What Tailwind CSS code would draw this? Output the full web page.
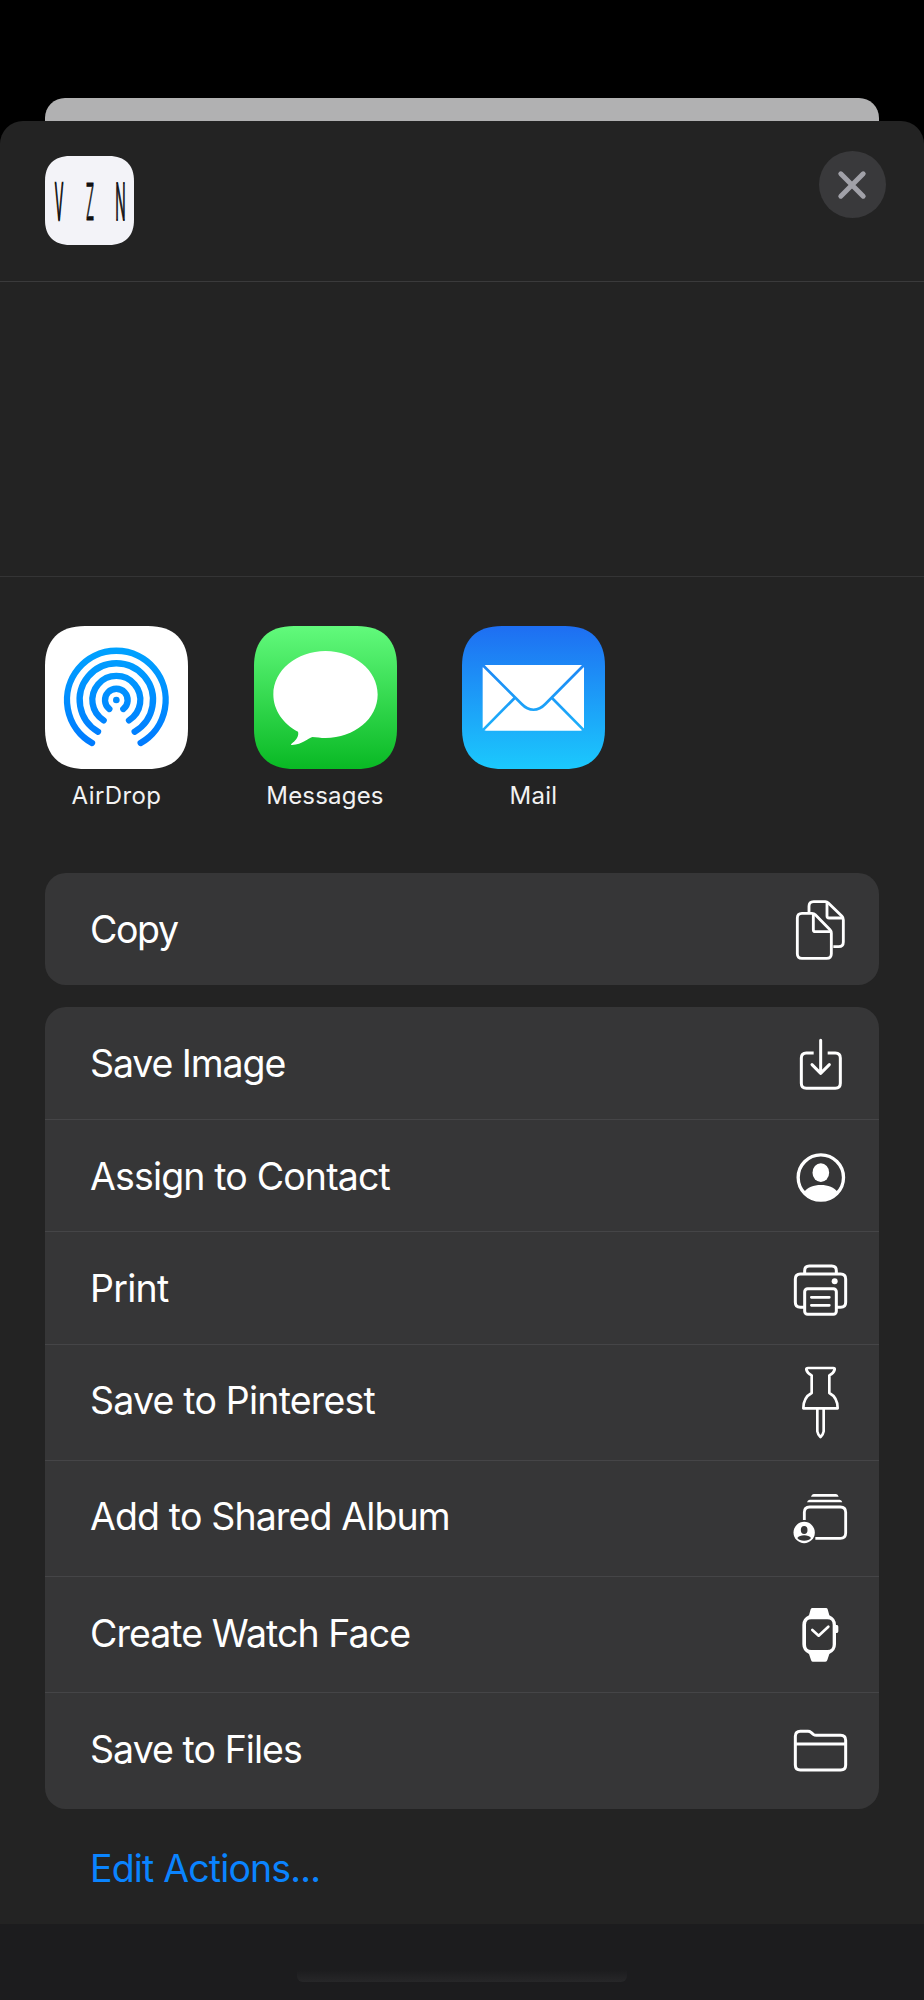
<!DOCTYPE html>
<html lang="en">
<head>
<meta charset="utf-8">
<title>Share</title>
<script src="https://cdn.jsdelivr.net/npm/@tailwindcss/browser@4"></script>
</head>
<body class="bg-black font-['Inter',sans-serif] text-white">
<div class="flex h-[2000px] w-[924px] flex-col overflow-hidden bg-black pt-[98px]">
  <div class="mx-[45px] h-[23px] shrink-0 rounded-t-[20px] bg-[#b1b1b2]"></div>
  <main class="flex flex-1 flex-col rounded-t-[23px] bg-[#232323]">
    <header class="flex h-[161px] shrink-0 items-start justify-between border-b border-[#3a3a3b] pt-[30px] pr-[38.500px] pl-[45px]">
      <svg class="mt-[5px] h-[89px] w-[89px]" viewBox="0 0 89 89">
        <path d="M0 25C0 9 9 0 25 0H64C80 0 89 9 89 25V64C89 80 80 89 64 89H25C9 89 0 80 0 64Z" fill="#f3f3f8"/>
        <g fill="#111" stroke="#111" font-family="Inter" font-size="51" font-weight="300" text-anchor="middle">
          <text transform="translate(14 63.500) scale(.25 1)" stroke-width="2.500">V</text>
          <text transform="translate(45 63.500) scale(.27 1)" stroke-width="1">Z</text>
          <text transform="translate(75.500 63.500) scale(.27 1)" stroke-width="2">N</text>
        </g>
      </svg>
      <button class="flex size-[67px] items-center justify-center rounded-full bg-[#39393b]" aria-label="Close">
        <svg class="size-[30px]" viewBox="0 0 30 30" fill="none" stroke="#a1a1a8" stroke-width="5" stroke-linecap="round"><path d="M3.800 3.800 26.200 26.200M26.200 3.800 3.800 26.200"/></svg>
      </button>
    </header>
    <section class="h-[295px] shrink-0 border-b border-[#343435]"></section>
    <section class="flex h-[296px] shrink-0 gap-[65.500px] pt-[49px] pl-[45px] text-[24px] leading-[30px] text-[#f2f2f2]">
      <div class="flex w-[143px] flex-col items-center gap-[12px]">
        <svg class="size-[143px] shrink-0" viewBox="44 48 429 429">
          <defs><linearGradient id="air" gradientUnits="userSpaceOnUse" x1="0" y1="113" x2="0" y2="408"><stop stop-color="#00a2ff"/><stop offset="1" stop-color="#007aff"/></linearGradient></defs>
          <path transform="translate(44 48)" d="M0 120C0 42 42 0 120 0H309C387 0 429 42 429 120V309C429 387 387 429 309 429H120C42 429 0 387 0 309Z" fill="#fff"/>
          <g fill="none" stroke="url(#air)" stroke-width="19" stroke-linecap="round">
            <path d="M185 399A148 148 0 1 1 331 399"/>
            <path d="M203 365A110 110 0 1 1 313 365"/>
            <path d="M220 331A72 72 0 1 1 296 331"/>
            <path d="M237 297A34 34 0 1 1 279 297"/>
          </g>
          <circle cx="258" cy="270" r="10" fill="#008cff"/>
        </svg>
        <span class="tracking-[0.4px]">AirDrop</span>
      </div>
      <div class="flex w-[143px] flex-col items-center gap-[12px]">
        <svg class="size-[143px] shrink-0" viewBox="671 48 429 429">
          <defs><linearGradient id="msg" x1="0" y1="0" x2="0" y2="1"><stop stop-color="#62fa7c"/><stop offset="1" stop-color="#09b924"/></linearGradient></defs>
          <path transform="translate(671 48)" d="M0 120C0 42 42 0 120 0H309C387 0 429 42 429 120V309C429 387 387 429 309 429H120C42 429 0 387 0 309Z" fill="url(#msg)"/>
          <path fill="#fff" d="M885.500 123C972 123 1042 181 1042 253.500S972 384 885.500 384C871 384 858 382 846 381C832 385 817 403 785 405C779 404 784 400 791 395C800 386 806 376 803 365C758 342 729 299 729 253.500C729 181 799 123 885.500 123Z"/>
        </svg>
        <span class="tracking-[0.2px]">Messages</span>
      </div>
      <div class="flex w-[143px] flex-col items-center gap-[12px]">
        <svg class="size-[143px] shrink-0" viewBox="396 48 429 429">
          <defs><linearGradient id="mail" gradientUnits="userSpaceOnUse" x1="0" y1="48" x2="0" y2="477"><stop stop-color="#1e6ef2"/><stop offset="1" stop-color="#1bc9fd"/></linearGradient>
          <linearGradient id="mailtile" x1="0" y1="0" x2="0" y2="1"><stop stop-color="#1e6ef2"/><stop offset="1" stop-color="#1bc9fd"/></linearGradient></defs>
          <path transform="translate(396 48)" d="M0 120C0 42 42 0 120 0H309C387 0 429 42 429 120V309C429 387 387 429 309 429H120C42 429 0 387 0 309Z" fill="url(#mailtile)"/>
          <rect x="458" y="165" width="304" height="197" rx="10" fill="#fff"/>
          <path fill="none" stroke="url(#mail)" stroke-width="8" d="M458 165 575 282C597 305 624 305 646 282L762 165M554 264 458 361M666 264 762 361"/>
        </svg>
        <span class="tracking-[0.3px]">Mail</span>
      </div>
    </section>
    <section class="mx-[45px] h-[112px] shrink-0 rounded-[21px] bg-[#363637] text-[37.500px] leading-[112px]">
      <div class="flex justify-between pr-[24px] pl-[45px]"><span class="mt-px tracking-[-1.4px]">Copy</span>
        <svg class="h-[112px] w-[70px] shrink-0" viewBox="45 39 210 336" fill="none" stroke="#fff" stroke-width="8.500" stroke-linejoin="round">
          <path d="M117 156V139Q117 125 131 125H166Q171 125 175 129L216 169Q220 173 220 180V246Q220 260 206 260H190"/>
          <path d="M171 126V168Q171 174 177 174H219"/>
          <path d="M96 160H126Q132 160 136 164L180 209Q184 213 184 220V281Q184 295 170 295H96Q82 295 82 281V174Q82 160 96 160Z"/>
          <path d="M130 161V209Q130 215 136 215H184"/>
        </svg></div>
    </section>
    <section class="mx-[45px] mt-[22px] h-[802px] shrink-0 overflow-hidden rounded-[21px] bg-[#363637] text-[37.500px] leading-[112px]">
      <div class="flex h-[113px] justify-between border-b border-[#454547] pr-[24px] pl-[45px]"><span class="mt-px tracking-[-1.1px]">Save Image</span>
        <svg class="h-[112px] w-[70px] shrink-0" viewBox="45 441 210 336" fill="none" stroke="#fff" stroke-width="9">
          <path d="M131 579H109Q94 579 94 594V670Q94 685 109 685H196Q211 685 211 670V594Q211 579 196 579H173"/>
          <path stroke-linecap="round" stroke-linejoin="round" d="M152 541V640M126 614 152 640 178 614"/>
        </svg></div>
      <div class="flex h-[112px] justify-between border-b border-[#454547] pr-[24px] pl-[45px]"><span class="mt-px tracking-[-0.85px]">Assign to Contact</span>
        <svg class="h-[112px] w-[70px] shrink-0" viewBox="45 0 210 336" fill="#fff">
          <circle cx="152.500" cy="172.500" r="68" fill="none" stroke="#fff" stroke-width="10"/>
          <ellipse cx="152.500" cy="158" rx="25" ry="28"/>
          <path d="M102 217C112 202 131 195 152.500 195S193 202 203 217C190 234 173 243 152.500 243S115 234 102 217Z"/>
        </svg></div>
      <div class="flex h-[113px] justify-between border-b border-[#454547] pr-[24px] pl-[45px]"><span class="mt-px tracking-[-0.75px]">Print</span>
        <svg class="h-[112px] w-[70px] shrink-0" viewBox="45 336 210 336" fill="none" stroke="#fff" stroke-width="9">
          <path d="M104 462V452Q104 438 118 438H185Q199 438 199 452V462"/>
          <path d="M104 562H91Q76 562 76 547V477Q76 462 91 462H212Q227 462 227 477V547Q227 562 212 562H199"/>
          <rect x="104" y="506" width="95" height="77" rx="9"/>
          <path stroke-width="8" stroke-linecap="round" d="M124 532H178M124 556H178"/>
          <circle cx="194" cy="484" r="9" fill="#fff" stroke="none"/>
        </svg></div>
      <div class="flex h-[116px] justify-between border-b border-[#454547] pr-[24px] pl-[45px]"><span class="tracking-[-0.8px]">Save to Pinterest</span>
        <svg class="h-[112px] w-[70px] shrink-0" viewBox="45 15 210 336" fill="none" stroke="#fff" stroke-width="8" stroke-linejoin="round">
          <path d="M114 84H190Q195 84 194 89C192 97 188 101 178 106V159C193 167 203 181 203 205H100C100 181 110 167 125 159V106C115 101 111 97 109 89Q108 84 114 84Z"/>
          <path d="M142 203V274Q143 282 151.500 291Q160 282 161 274V203"/>
        </svg></div>
      <div class="flex h-[116px] justify-between border-b border-[#454547] pr-[24px] pl-[45px]"><span class="tracking-[-0.87px]">Add to Shared Album</span>
        <svg class="h-[112px] w-[70px] shrink-0" viewBox="45 363 210 336" fill="none" stroke="#fff" stroke-width="8.500">
          <path d="M103 540V517Q103 501 119 501H211Q227 501 227 517V579Q227 595 211 595H136"/>
          <g fill="#fff" stroke="none">
            <path d="M131 462H198Q204 462 206 470H123Q125 462 131 462ZM119 479H209Q215 479 217 487H111Q113 479 119 479Z"/>
            <circle cx="102.500" cy="577.500" r="32"/>
          </g>
          <g fill="#363637" stroke="none"><ellipse cx="102.500" cy="570" rx="10" ry="12"/><path d="M82 594Q88 586 102.500 586T123 594Q117 602 102.500 602T82 594Z"/></g>
        </svg></div>
      <div class="flex h-[116px] justify-between border-b border-[#454547] pr-[24px] pl-[45px]"><span class="mt-px tracking-[-0.95px]">Create Watch Face</span>
        <svg class="h-[112px] w-[70px] shrink-0" viewBox="45 21 210 336" fill="#fff">
          <path fill-rule="evenodd" d="M128 114H168Q172 114 173 118L178 136Q198 145 198 165H201Q205 165 205 170V184Q205 189 201 189H198V223Q198 243 178 252L172 270Q171 275 166 275H128Q124 275 123 270L117 252Q97 243 97 223V165Q97 145 117 136L122 118Q123 114 128 114ZM124 148Q108 148 108 164V224Q108 240 124 240H172Q188 240 188 224V164Q188 148 172 148Z"/>
          <path fill="none" stroke="#fff" stroke-width="8" stroke-linecap="round" stroke-linejoin="round" d="M127 180 146 197 175 170"/>
        </svg></div>
      <div class="flex h-[116px] justify-between pr-[24px] pl-[45px]"><span class="mt-px tracking-[-0.95px]">Save to Files</span>
        <svg class="h-[112px] w-[70px] shrink-0" viewBox="45 369 210 336" fill="none" stroke="#fff" stroke-width="9" stroke-linejoin="round">
          <path d="M91 484H114Q119 484 123 487L130 493Q134 496 139 496H212Q227 496 227 511V585Q227 600 212 600H91Q76 600 76 585V499Q76 484 91 484Z"/>
          <path d="M76 522H227"/>
        </svg></div>
    </section>
    <div class="h-[115px] shrink-0 pt-[4px] pl-[90px] text-[37.500px] leading-[112px] text-[#0a84ff]"><span class="tracking-[-0.85px]">Edit Actions...</span></div>
    <footer class="flex flex-1 justify-center bg-[#1c1c1e] pt-[46px]"><div class="h-[12px] w-[330px] rounded-b-[6px] bg-linear-to-b from-[#1c1c1e] to-[#272729]"></div></footer>
  </main>
</div>
</body>
</html>
